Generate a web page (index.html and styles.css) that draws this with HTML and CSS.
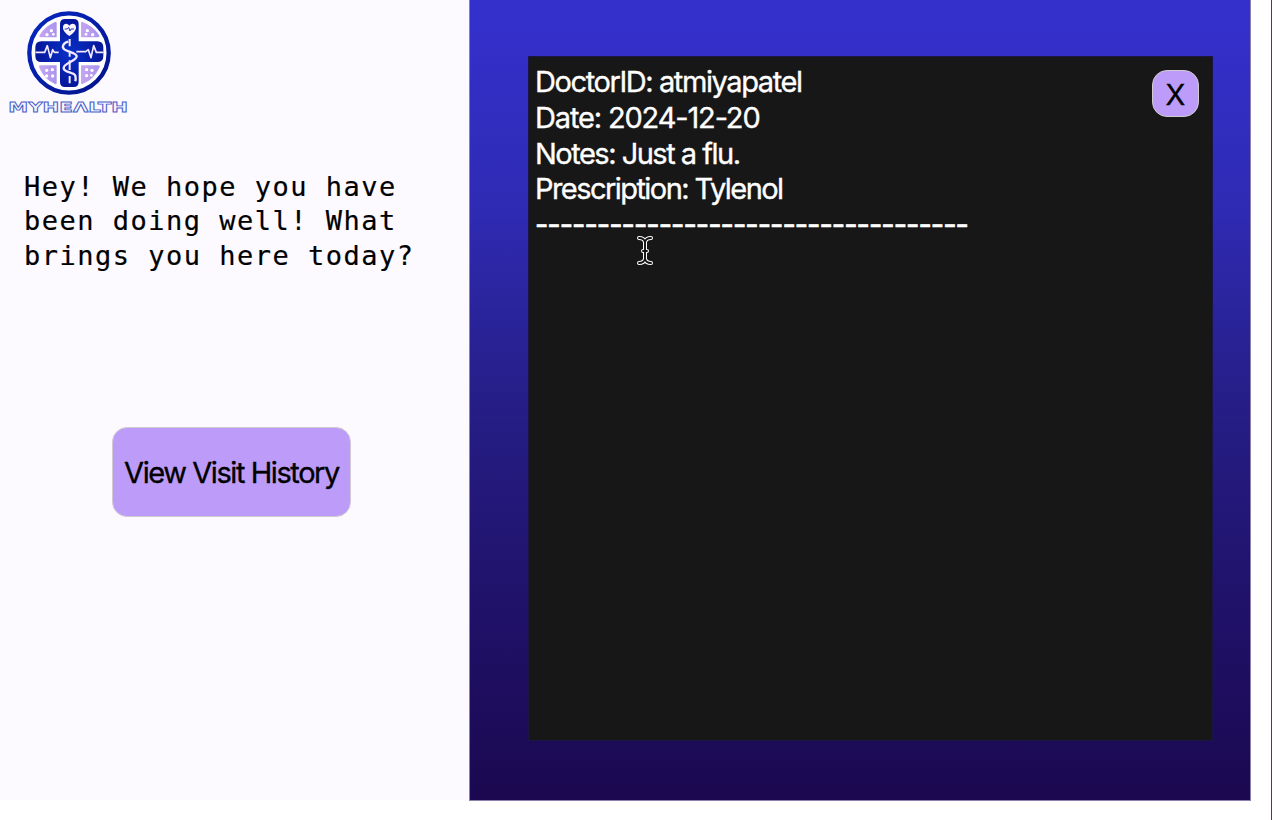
FILE: index.html
```
<!DOCTYPE html>
<html lang="en">
<head>
<meta charset="utf-8">
<title>MyHealth</title>
<link rel="stylesheet" href="styles.css">
</head>
<body>
<div class="app">
  <aside class="side">
    <svg class="logo" viewBox="0 0 420 375" role="img" aria-label="MyHealth">
      <defs>
        <radialGradient id="cross"><stop offset="0" stop-color="#0730c8"/><stop offset="1" stop-color="#06179a"/></radialGradient>
        <linearGradient id="ring" x1="0" y1="0" x2="1" y2="1"><stop offset="0" stop-color="#0628c0"/><stop offset="1" stop-color="#04138c"/></linearGradient>
        <linearGradient id="quad"><stop offset="0" stop-color="#c7a4f3"/><stop offset="1" stop-color="#a995ee"/></linearGradient>
      </defs>
      <circle cx="207" cy="159" r="119" fill="#fff" stroke="url(#ring)" stroke-width="13"/>
      <g fill="url(#quad)">
        <path d="M165 66Q170 64 170 70V112H125Q115 112 119 105Q134 79 165 66Z"/>
        <path d="M248 66Q243 64 243 70V112H292Q301 112 297 105Q281 79 248 66Z"/>
        <path d="M165 252Q170 254 170 248V196H123Q115 196 118 203Q132 237 165 252Z"/>
        <path d="M248 252Q243 254 243 248V196H294Q302 196 298 203Q283 237 248 252Z"/>
      </g>
      <path d="M195 57H221Q236 57 236 72V124H292Q310 124 310 142V168Q310 186 292 186H236V246Q236 261 221 261H195Q180 261 180 246V186H124Q106 186 106 168V142Q106 124 124 124H180V72Q180 57 195 57Z" fill="url(#cross)"/>
      <path d="M208 108C196 100 188 91 189 81C190 69 203 68 208 77C213 68 227 69 228 81C229 91 220 100 208 108Z" fill="#fbf4ff"/>
      <path d="M194 87H202L206 82L210 93L213 87H222" fill="none" stroke="#233bb9" stroke-width="3"/>
      <g fill="none" stroke="#f4e9ff" stroke-width="5" stroke-linejoin="round">
        <path d="M107 157H134L142 137L151 173L158 149L163 157H176M229 155H257L265 149L273 173L281 137L289 157H310"/>
        <path d="M209 117V139M209 153V170M209 181V210M209 228V250" stroke-width="6"/>
        <path d="M205 125C190 128 184 141 193 148C204 156 230 158 230 169C230 184 190 189 191 205C192 218 222 216 226 227Q228 236 226 244" stroke-width="7"/>
      </g>
      <g fill="#fff">
        <circle cx="154" cy="92" r="5"/><circle cx="141" cy="104" r="5"/><circle cx="160" cy="103" r="4"/>
        <circle cx="262" cy="92" r="5"/><circle cx="278" cy="104" r="5"/><circle cx="258" cy="103" r="4"/>
        <circle cx="140" cy="211" r="5"/><circle cx="157" cy="209" r="5"/><circle cx="140" cy="228" r="5"/><circle cx="158" cy="228" r="5"/>
        <circle cx="260" cy="209" r="5"/><circle cx="276" cy="211" r="5"/><circle cx="260" cy="227" r="5"/><circle cx="274" cy="226" r="4"/>
      </g>
      <text class="brand" x="25" y="337" textLength="359" lengthAdjust="spacingAndGlyphs">MYHEΛLTH</text>
    </svg>
    <p class="greeting">Hey! We hope you have<br>been doing well! What<br>brings you here today?</p>
    <button class="btn history">View Visit History</button>
  </aside>
  <main class="main">
    <section class="panel">
      <div class="record">
        <div class="row doctor">DoctorID: atmiyapatel</div>
        <div class="row date">Date: 2024-12-20</div>
        <div class="row notes">Notes: Just a flu.</div>
        <div class="row rx">Prescription: Tylenol</div>
        <div class="row rule">-----------------------------------</div>
      </div>
      <button class="btn close">X</button>
      <svg class="cursor" viewBox="0 0 16 30"><path d="M2 2Q7 2 8 6Q9 2 14 2M2 27Q7 27 8 23Q9 27 14 27M8 6V23M6 15H10" fill="none" stroke="#fff" stroke-width="4" stroke-linecap="round"/><path d="M2 2Q7 2 8 6Q9 2 14 2M2 27Q7 27 8 23Q9 27 14 27M8 6V23M6 15H10" fill="none" stroke="#111" stroke-width="1.9" stroke-linecap="round"/></svg>
    </section>
  </main>
</div>
</body>
</html>
```
FILE: styles.css
```
* { box-sizing: border-box; }
body { margin: 0; height: 820px; overflow: hidden; background: #fff; border-right: 1px solid #4b4247; font-family: Inter, sans-serif; }
.app { display: flex; width: 1251px; height: 801px; }
.side { width: 469px; height: 800px; flex: none; background: #fcfaff; display: flex; flex-direction: column; align-items: flex-start; }
.logo { width: 140px; height: 125px; flex: none; display: block; }
.brand { font: bold 43px "DejaVu Sans", sans-serif; fill: #f6f5ff; stroke: #4a60c6; stroke-width: 2.4px; }
.greeting { margin: 45px 0 0 24px; font: 27px/34.3px "DejaVu Sans Mono", monospace; letter-spacing: 1.5px; -webkit-text-stroke: 0.2px #000; white-space: nowrap; color: #000; }
.btn { font: 29px/1 Inter, sans-serif; color: #000; background: #bd9cf9; border: 1.5px solid #d0cbd2; padding: 0; white-space: nowrap; -webkit-text-stroke: 0.35px #000; }
.history { width: 239px; height: 90px; margin: 154px 0 0 112px; border-radius: 15px; letter-spacing: -1.42px; padding-top: 2px; }
.main { flex: 1; padding: 56px 37px 60px 58px; background: linear-gradient(#3430cd, #2f2bb5 25%, #261e87 50%, #20126a 75%, #1b0850); border: solid #8d7fac; border-width: 0 1px 1px; }
.panel { position: relative; width: 685px; height: 685px; display: flex; justify-content: space-between; align-items: flex-start; background: #171717; border: 1px solid #1b1743; padding: 7px 13px 0 6px; }
.record { color: #fff; font-size: 29px; line-height: 35.8px; white-space: nowrap; -webkit-text-stroke: 0.35px #fff; }
.doctor { letter-spacing: -1.41px; }
.date { letter-spacing: -1.15px; }
.notes { letter-spacing: -1.5px; }
.rx { letter-spacing: -1.56px; }
.rule { letter-spacing: -0.97px; -webkit-text-stroke: 0.7px #fff; }
.close { width: 47px; height: 47px; margin-top: 6px; padding-top: 1px; border-radius: 15px; }
.cursor { position: absolute; left: 108px; top: 179px; width: 16px; height: 30px; }
```
